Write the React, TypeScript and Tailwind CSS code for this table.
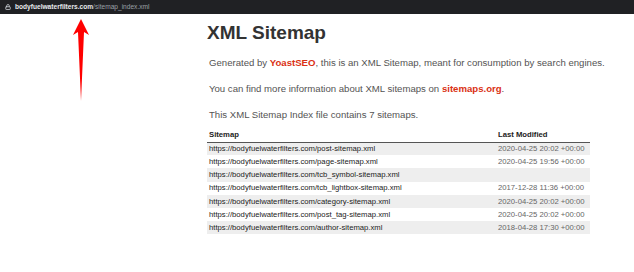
import { Lock } from 'lucide-react';

const rows = [
  { loc: 'https://bodyfuelwaterfilters.com/post-sitemap.xml', mod: '2020-04-25 20:02 +00:00' },
  { loc: 'https://bodyfuelwaterfilters.com/page-sitemap.xml', mod: '2020-04-25 19:56 +00:00' },
  { loc: 'https://bodyfuelwaterfilters.com/tcb_symbol-sitemap.xml', mod: '' },
  { loc: 'https://bodyfuelwaterfilters.com/tcb_lightbox-sitemap.xml', mod: '2017-12-28 11:36 +00:00' },
  { loc: 'https://bodyfuelwaterfilters.com/category-sitemap.xml', mod: '2020-04-25 20:02 +00:00' },
  { loc: 'https://bodyfuelwaterfilters.com/post_tag-sitemap.xml', mod: '2020-04-25 20:02 +00:00' },
  { loc: 'https://bodyfuelwaterfilters.com/author-sitemap.xml', mod: '2018-04-28 17:30 +00:00' },
];

export default function App() {
  return (
    <div className="relative w-[634px] h-[272px] overflow-hidden bg-white font-['Liberation_Sans',Arial,sans-serif]">
      <div className="flex items-center h-[14px] bg-[#202124] pl-[5px] gap-[4px] text-[6.6px]">
        <Lock className="w-[6px] h-[6px] text-gray-300" strokeWidth={3} />
        <span className="whitespace-nowrap">
          <span className="text-[#e8eaed] font-semibold">bodyfuelwaterfilters.com</span>
          <span className="text-[#9aa0a6]">/sitemap_index.xml</span>
        </span>
      </div>

      <div className="pl-[207px] pt-[7px] text-[#545353]">
        <h1 className="text-[19px] font-bold text-[#333] leading-[24px]">XML Sitemap</h1>
        <div className="mt-[12px] ml-[2px] text-[9.6px] leading-[12px] flex flex-col gap-[14px] whitespace-nowrap">
          <p>
            Generated by <span className="text-[#da3114] font-bold">YoastSEO</span>, this is an XML Sitemap, meant for consumption by search engines.
          </p>
          <p>
            You can find more information about XML sitemaps on <span className="text-[#da3114] font-bold">sitemaps.org</span>.
          </p>
          <p>This XML Sitemap Index file contains 7 sitemaps.</p>
        </div>

        <table className="mt-[7px] w-[383px] border-collapse text-[7.7px] text-[#222] whitespace-nowrap">
          <thead>
            <tr className="border-b border-[#555]">
              <th className="text-left font-bold pl-[2px] h-[14px]">Sitemap</th>
              <th className="text-left font-bold pl-[2px]">Last Modified</th>
            </tr>
          </thead>
          <tbody>
            {rows.map((r, i) => (
              <tr key={i} className={i % 2 === 0 ? 'bg-[#eee]' : 'bg-white'}>
                <td className="h-[13.2px] pl-[2px] p-0">{r.loc}</td>
                <td className="pl-[2px] text-[#666] w-[94px]">{r.mod}</td>
              </tr>
            ))}
          </tbody>
        </table>
      </div>

      <svg className="absolute left-[70px] top-[17px]" width="22" height="86" viewBox="0 0 22 86">
        <path d="M11 2 L19 18 L14 15 L11 84 L8 15 L3 18 Z" fill="#f00" />
      </svg>
    </div>
  );
}
